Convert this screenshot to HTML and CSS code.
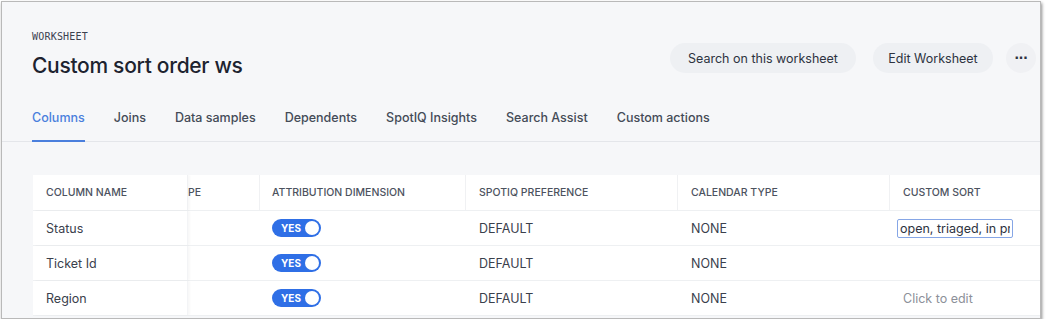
FILE: index.html
```html
<!DOCTYPE html>
<html lang="en">
<head>
    <meta charset="UTF-8">
    <meta name="viewport" content="width=device-width, initial-scale=1.0">
    <title>Custom sort order ws</title>
    <link rel="stylesheet" href="styles.css">
</head>
<body>

    <div class="frame">
        <!-- Header -->
        <div class="header">
            <div class="title-block">
                <div class="kicker">WORKSHEET</div>
                <h1 class="title">Custom sort order ws</h1>
            </div>
            <div class="actions">
                <button class="pill search-btn">Search on this worksheet</button>
                <button class="pill edit-btn">Edit Worksheet</button>
                <button class="more-btn">&middot;&middot;&middot;</button>
            </div>
        </div>

        <!-- Tabs -->
        <div class="tabs">
            <span class="tab active">Columns</span>
            <span class="tab">Joins</span>
            <span class="tab">Data samples</span>
            <span class="tab">Dependents</span>
            <span class="tab">SpotIQ Insights</span>
            <span class="tab">Search Assist</span>
            <span class="tab">Custom actions</span>
        </div>

        <!-- Columns table -->
        <div class="table-wrap">
            <div class="table">
                <div class="row head">
                    <div class="cell c-name">COLUMN NAME</div>
                    <div class="cell c-type">PE</div>
                    <div class="cell c-attr">ATTRIBUTION DIMENSION</div>
                    <div class="cell c-spot">SPOTIQ PREFERENCE</div>
                    <div class="cell c-cal">CALENDAR TYPE</div>
                    <div class="cell c-sort">CUSTOM SORT</div>
                </div>
                <div class="row">
                    <div class="cell c-name">Status</div>
                    <div class="cell c-type"></div>
                    <div class="cell c-attr"><span class="toggle">YES</span></div>
                    <div class="cell c-spot">DEFAULT</div>
                    <div class="cell c-cal">NONE</div>
                    <div class="cell c-sort"><input class="sort-input" type="text" value="open, triaged, in progress, closed"></div>
                </div>
                <div class="row">
                    <div class="cell c-name">Ticket Id</div>
                    <div class="cell c-type"></div>
                    <div class="cell c-attr"><span class="toggle">YES</span></div>
                    <div class="cell c-spot">DEFAULT</div>
                    <div class="cell c-cal">NONE</div>
                    <div class="cell c-sort"></div>
                </div>
                <div class="row">
                    <div class="cell c-name">Region</div>
                    <div class="cell c-type"></div>
                    <div class="cell c-attr"><span class="toggle">YES</span></div>
                    <div class="cell c-spot">DEFAULT</div>
                    <div class="cell c-cal">NONE</div>
                    <div class="cell c-sort placeholder">Click to edit</div>
                </div>
            </div>
        </div>
    </div>

</body>
</html>
```

FILE: styles.css
```css
body {
    margin: 0;
    background-color: #ffffff;
    font-family: Inter, "Noto Sans", Arial, sans-serif;
    color: #1d232f;
}
.frame {
    width: 1038px;
    height: 316px;
    margin: 1px 0 0 1px;
    border: 1px solid #b9b9b9;
    box-shadow: 1px 2px 3px rgba(0,0,0,0.45);
    background-color: #f6f7f9;
    overflow: hidden;
}
.header {
    display: flex;
    justify-content: space-between;
    align-items: flex-start;
    padding: 28px 0 0 30px;
}
.kicker {
    font-family: "DejaVu Sans Mono", monospace;
    font-size: 10px;
    line-height: 14px;
    letter-spacing: 0.2px;
    color: #3c4250;
}
.title {
    margin: 8px 0 0;
    font-size: 21px;
    line-height: 28px;
    font-weight: 500;
    letter-spacing: -0.3px;
    color: #1d232f;
}
.actions {
    display: flex;
    align-items: center;
    gap: 17px;
    margin-top: 13px;
    padding-right: 4px;
}
.pill {
    height: 30px;
    border: none;
    border-radius: 15px;
    background-color: #eef0f3;
    font-family: inherit;
    font-size: 12.5px;
    color: #2d3340;
    padding: 0;
    white-space: nowrap;
}
.search-btn {
    width: 186px;
}
.edit-btn {
    width: 120px;
}
.more-btn {
    width: 30px;
    height: 30px;
    border: none;
    border-radius: 50%;
    background-color: #f0f1f4;
    font-size: 16px;
    font-weight: 700;
    color: #2d3340;
    padding: 0;
    margin-left: -4px;
    letter-spacing: -1px;
}
.tabs {
    display: flex;
    gap: 29px;
    padding: 28px 0 0 30px;
    border-bottom: 1px solid #e4e6ea;
}
.tab {
    font-size: 12.5px;
    line-height: 20px;
    font-weight: 500;
    color: #444b57;
    padding-bottom: 12px;
    border-bottom: 2px solid transparent;
    margin-bottom: -1px;
}
.tab.active {
    color: #4a7fdd;
    border-bottom-color: #4a7fdd;
}
.table-wrap {
    margin: 33px 0 0 31px;
    overflow: hidden;
}
.table {
    width: 1060px;
    background-color: #ffffff;
}
.row {
    display: flex;
    height: 34px;
    border-bottom: 1px solid #eef0f2;
}
.row.head {
    height: 35px;
}
.cell {
    display: flex;
    align-items: center;
    padding-left: 13px;
    box-sizing: border-box;
    font-size: 12.5px;
    color: #3a404c;
}
.head .cell {
    font-size: 10.5px;
    font-weight: 500;
    color: #4c525e;
    border-right: 1px solid #f0f1f3;
}
.c-name {
    width: 155px;
    background-color: #ffffff;
    box-shadow: 2px 0 2px rgba(0,0,0,0.03);
    border-right: 1px solid #f3f4f6;
}
.c-type {
    width: 72px;
    padding-left: 0;
}
.c-attr {
    width: 206px;
    padding-left: 12px;
}
.c-spot {
    width: 212px;
}
.c-cal {
    width: 212px;
}
.c-sort {
    width: 200px;
}
.row:not(.head) .c-sort {
    padding-left: 7px;
}
.row:not(.head) .placeholder {
    padding-left: 13px;
    color: #8c9099;
}
.toggle {
    position: relative;
    display: inline-block;
    width: 49px;
    height: 18px;
    box-sizing: border-box;
    border-radius: 9px;
    background-color: #2f6fe6;
    color: #ffffff;
    font-size: 10px;
    font-weight: 700;
    line-height: 18px;
    padding-left: 9px;
}
.toggle::after {
    content: "";
    position: absolute;
    right: 2px;
    top: 2px;
    width: 14px;
    height: 14px;
    border-radius: 50%;
    background-color: #ffffff;
}
.sort-input {
    width: 116px;
    height: 19px;
    box-sizing: border-box;
    border: 1px solid #86a6e6;
    border-radius: 2px;
    padding: 0 2px;
    font-family: inherit;
    font-size: 12.5px;
    color: #2d3340;
    outline: none;
}
```
